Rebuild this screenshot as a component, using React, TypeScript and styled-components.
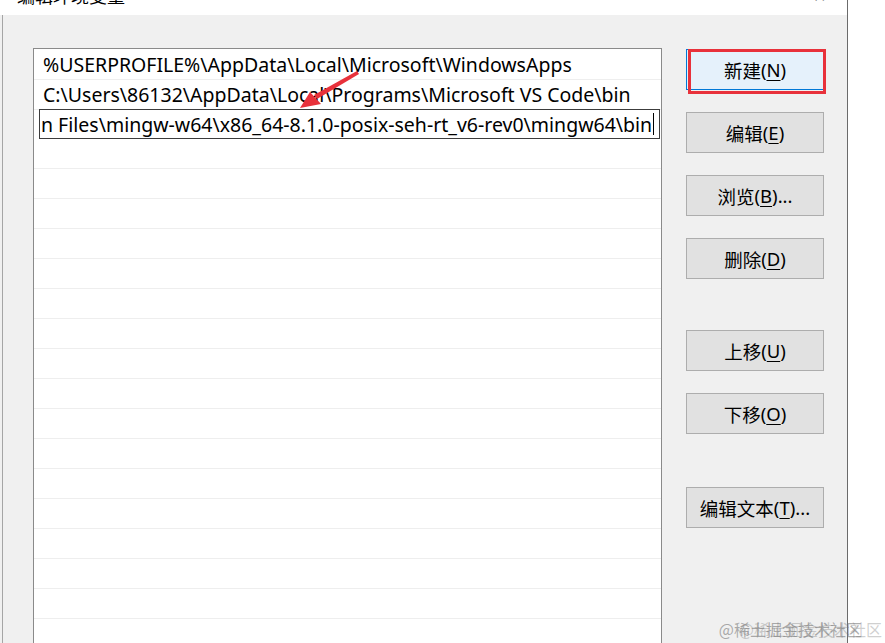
import React from "react";
import styled, { createGlobalStyle } from "styled-components";

const GlobalStyle = createGlobalStyle`
  html, body { margin: 0; padding: 0; background: #ffffff; overflow: hidden; }
  #root { width: 885px; height: 643px; }
`;

const LATIN = `"Noto Sans", "Noto Sans CJK SC", sans-serif`;
const CJK = `"Noto Sans CJK SC", "Noto Sans", sans-serif`;

const Page = styled.div`
  position: relative;
  width: 885px;
  height: 643px;
  display: flex;
  background: #ffffff;
  overflow: hidden;
`;

const Dialog = styled.div`
  width: 847px;
  height: 643px;
  display: flex;
  flex-direction: column;
  background: #f0f0f0;
  border-right: 1px solid #6b6b6b;
`;

const TitleBar = styled.div`
  height: 15px;
  flex: none;
  display: flex;
  align-items: flex-start;
  justify-content: space-between;
  padding: 0 21px 0 17px;
  background: #ffffff;
  overflow: hidden;
`;

const TitleText = styled.span`
  font-family: ${CJK};
  font-size: 18px;
  line-height: 18px;
  margin-top: -14px;
  color: #000;
`;

const CloseGlyph = styled.span`
  font-family: ${LATIN};
  font-size: 16px;
  line-height: 16px;
  margin-top: -12px;
  color: #333;
`;

const Body = styled.div`
  flex: 1;
  display: flex;
  margin-left: 2px;
  border-left: 1px solid #a5a5a5;
  padding: 33px 0 0 30px;
  min-height: 0;
`;

const ListBox = styled.div`
  width: 627px;
  flex: none;
  display: flex;
  flex-direction: column;
  background: #ffffff;
  border: 1px solid #8a8a8a;
  border-bottom: none;
  padding-top: 1px;
`;

const Row = styled.div`
  height: 29px;
  flex: none;
  display: flex;
  align-items: center;
  padding-left: 9px;
  border-bottom: 1px solid #eeeeee;
  font-family: ${LATIN};
  font-size: 19.5px;
  color: #000;
  white-space: nowrap;
  overflow: hidden;
`;

const EditRow = styled.div`
  height: 30px;
  flex: none;
  display: flex;
  padding: 0 1px 0 5px;
  margin-top: -1px;
`;

const EditField = styled.div`
  flex: 1;
  display: flex;
  align-items: center;
  border: 1px solid #3c3c3c;
  padding-left: 1px;
  font-family: ${LATIN};
  font-size: 19.5px;
  color: #000;
  white-space: nowrap;
  overflow: hidden;
  background: #fff;
`;

const Caret = styled.span`
  display: inline-block;
  flex: none;
  width: 1px;
  height: 22px;
  background: #000;
  margin-left: 1px;
`;

const ButtonColumn = styled.div`
  display: flex;
  flex-direction: column;
  margin-left: 24px;
  padding-top: 1px;
  width: 138px;
`;

const Button = styled.div<{ $gap: number; $focused?: boolean }>`
  height: 39px;
  margin-top: ${(p) => p.$gap}px;
  display: flex;
  align-items: center;
  justify-content: center;
  background: ${(p) => (p.$focused ? "#e5f1fb" : "#e1e1e1")};
  border: 1px solid ${(p) => (p.$focused ? "#0078d7" : "#adadad")};
  font-family: ${CJK};
  font-size: 18.5px;
  color: #000;
  white-space: nowrap;
`;

const Mnemonic = styled.span`
  text-decoration: underline;
  text-decoration-thickness: 1px;
  text-underline-offset: 3px;
  font-family: ${LATIN};
`;

const Latin = styled.span`
  font-family: ${LATIN};
`;

const Highlight = styled.div`
  position: absolute;
  left: 688px;
  top: 49px;
  width: 132px;
  height: 39px;
  border: 3px solid #e8313b;
  pointer-events: none;
`;

const ArrowSvg = styled.svg`
  position: absolute;
  left: 290px;
  top: 66px;
  pointer-events: none;
`;

const Watermark = styled.div`
  position: absolute;
  right: 3px;
  bottom: 2px;
  font-family: ${CJK};
  font-size: 16px;
  color: rgba(120, 120, 120, 0.6);
  text-shadow: 20px 0 0 rgba(120, 120, 120, 0.35);
  padding-right: 20px;
  white-space: nowrap;
`;

type Btn = { label: string; key: string; tail?: string; gap: number; focused?: boolean };

const buttons: Btn[] = [
  { label: "新建", key: "N", gap: 0, focused: true },
  { label: "编辑", key: "E", gap: 22 },
  { label: "浏览", key: "B", tail: "...", gap: 22 },
  { label: "删除", key: "D", gap: 22 },
  { label: "上移", key: "U", gap: 51 },
  { label: "下移", key: "O", gap: 22 },
  { label: "编辑文本", key: "T", tail: "...", gap: 53 },
];

const emptyRows = Array.from({ length: 17 });

export default function App() {
  return (
    <>
      <GlobalStyle />
      <Page>
        <Dialog>
          <TitleBar>
            <TitleText>编辑环境变量</TitleText>
            <CloseGlyph>✕</CloseGlyph>
          </TitleBar>
          <Body>
            <ListBox>
              <Row>%USERPROFILE%\AppData\Local\Microsoft\WindowsApps</Row>
              <Row>C:\Users\86132\AppData\Local\Programs\Microsoft VS Code\bin</Row>
              <EditRow>
                <EditField>
                  n Files\mingw-w64\x86_64-8.1.0-posix-seh-rt_v6-rev0\mingw64\bin
                  <Caret />
                </EditField>
              </EditRow>
              {emptyRows.map((_, i) => (
                <Row key={i} />
              ))}
            </ListBox>
            <ButtonColumn>
              {buttons.map((b) => (
                <Button key={b.key} $gap={b.gap} $focused={b.focused}>
                  {b.label}
                  <Latin>(</Latin>
                  <Mnemonic>{b.key}</Mnemonic>
                  <Latin>){b.tail ?? ""}</Latin>
                </Button>
              ))}
            </ButtonColumn>
          </Body>
        </Dialog>
        <Highlight />
        <ArrowSvg width="80" height="50" viewBox="0 0 80 50">
          <polygon points="67,5 69,8 27,33 24,29" fill="#e8313b" />
          <polygon points="10,42 20,26 31,38" fill="#e8313b" />
        </ArrowSvg>
        <Watermark>@稀土掘金技术社区</Watermark>
      </Page>
    </>
  );
}
